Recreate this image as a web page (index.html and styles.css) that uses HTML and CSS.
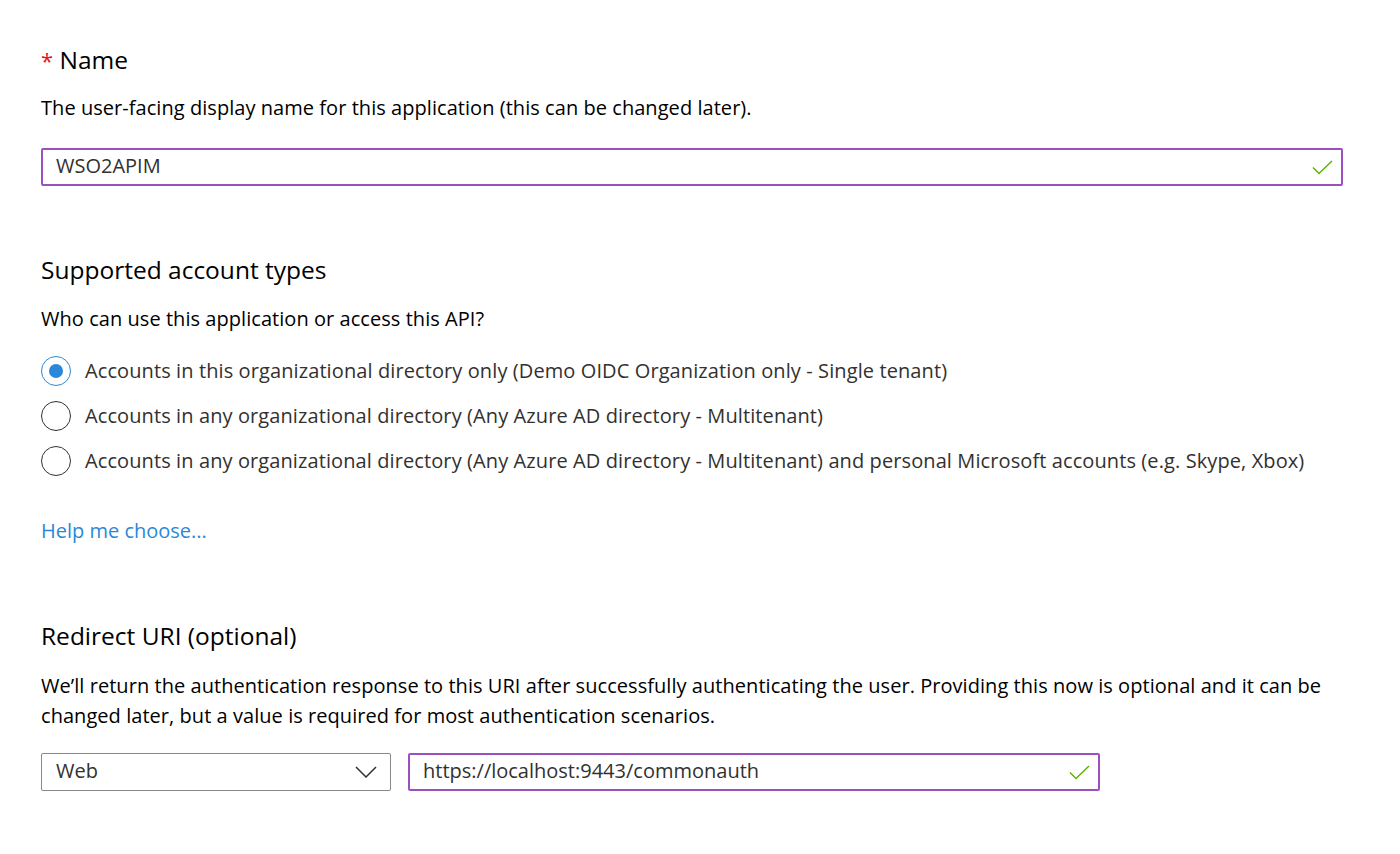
FILE: index.html
```html
<!DOCTYPE html>
<html>
<head>
<meta charset="utf-8">
<link rel="stylesheet" href="styles.css">
</head>
<body>
<main class="form">
  <section class="section">
    <h2 class="heading"><span class="req">*</span> Name</h2>
    <p class="desc">The user-facing display name for this application (this can be changed later).</p>
    <div class="field field-full valid">
      <span class="value">WSO2APIM</span>
      <svg class="check" width="21" height="15" viewBox="0 0 21 15"><path d="M1 7.5 L7 13.5 L20 1" fill="none" stroke="#5fb300" stroke-width="1.5"/></svg>
    </div>
  </section>

  <section class="section sec-accounts">
    <h2 class="heading">Supported account types</h2>
    <p class="desc desc-who">Who can use this application or access this API?</p>
    <ul class="radios">
      <li class="radio-row"><span class="radio checked"></span><span class="label">Accounts in this organizational directory only (Demo OIDC Organization only - Single tenant)</span></li>
      <li class="radio-row"><span class="radio"></span><span class="label">Accounts in any organizational directory (Any Azure AD directory - Multitenant)</span></li>
      <li class="radio-row"><span class="radio"></span><span class="label">Accounts in any organizational directory (Any Azure AD directory - Multitenant) and personal Microsoft accounts (e.g. Skype, Xbox)</span></li>
    </ul>
    <a class="link" href="#">Help me choose...</a>
  </section>

  <section class="section sec-redirect">
    <h2 class="heading">Redirect URI (optional)</h2>
    <p class="desc para">We’ll return the authentication response to this URI after successfully authenticating the user. Providing this now is optional and it can be changed later, but a value is required for most authentication scenarios.</p>
    <div class="uri-row">
      <div class="field select">
        <span class="value">Web</span>
        <svg class="chev" width="22" height="12" viewBox="0 0 22 12"><path d="M1 1 L11 11 L21 1" fill="none" stroke="#323130" stroke-width="1.5"/></svg>
      </div>
      <div class="field url valid">
        <span class="value">https://localhost:9443/commonauth</span>
        <svg class="check" width="21" height="15" viewBox="0 0 21 15"><path d="M1 7.5 L7 13.5 L20 1" fill="none" stroke="#5fb300" stroke-width="1.5"/></svg>
      </div>
    </div>
  </section>
</main>
</body>
</html>
```

FILE: styles.css
```css
* { box-sizing: border-box; }
html, body { margin: 0; padding: 0; background: #fff; }
body {
  font-family: "Open Sans", "Noto Sans", "Liberation Sans", sans-serif;
  color: #000;
}
.form {
  padding: 42px 57px 0 41px;
}
.section { margin: 0; }
.heading {
  font-size: 24.5px;
  font-weight: 400;
  line-height: 36px;
  margin: 0;
}
.req { color: #e81123; font-size: 22px; }
.desc {
  font-size: 20px;
  line-height: 30px;
  margin: 15px 0 0 0;
  letter-spacing: 0.05px;
}
.field {
  height: 38px;
  border: 1px solid #8a8886;
  border-radius: 2px;
  display: flex;
  align-items: center;
  justify-content: space-between;
  padding: 0 13px 0 14px;
  font-size: 20px;
  color: #323130;
}
.field .value { margin-top: -3px; }
.field.valid { border: 2px solid #9b4fc0; padding-left: 13px; padding-right: 8px; }
.field-full { margin-top: 25px; width: 1302px; }
.check { display: block; }
.sec-accounts { margin-top: 66px; }
.desc-who { margin-top: 16px; }
.radios { list-style: none; margin: 23px 0 0 0; padding: 0; display: flex; flex-direction: column; gap: 17px; }
.radio-row { display: flex; align-items: center; gap: 14px; height: 28px; }
.radio {
  width: 30px; height: 30px;
  border: 1.5px solid #323130;
  border-radius: 50%;
  flex: none;
  display: flex; align-items: center; justify-content: center;
}
.radio.checked { border-color: #2b88d8; }
.radio.checked::after {
  content: ""; width: 14px; height: 14px; border-radius: 50%; background: #2b88d8;
}
.label { font-size: 20px; color: #323130; line-height: 28px; letter-spacing: 0.1px; }
.link {
  display: inline-block;
  margin-top: 41px;
  font-size: 20px;
  line-height: 30px;
  color: #2b88d8;
  text-decoration: none;
}
.sec-redirect { margin-top: 72px; }
.para { margin-top: 17px; max-width: 1300px; }
.uri-row { display: flex; gap: 17px; margin-top: 22px; }
.select { width: 350px; border-color: #8a8886; }
.url { width: 692px; }
.chev { display: block; }
```
